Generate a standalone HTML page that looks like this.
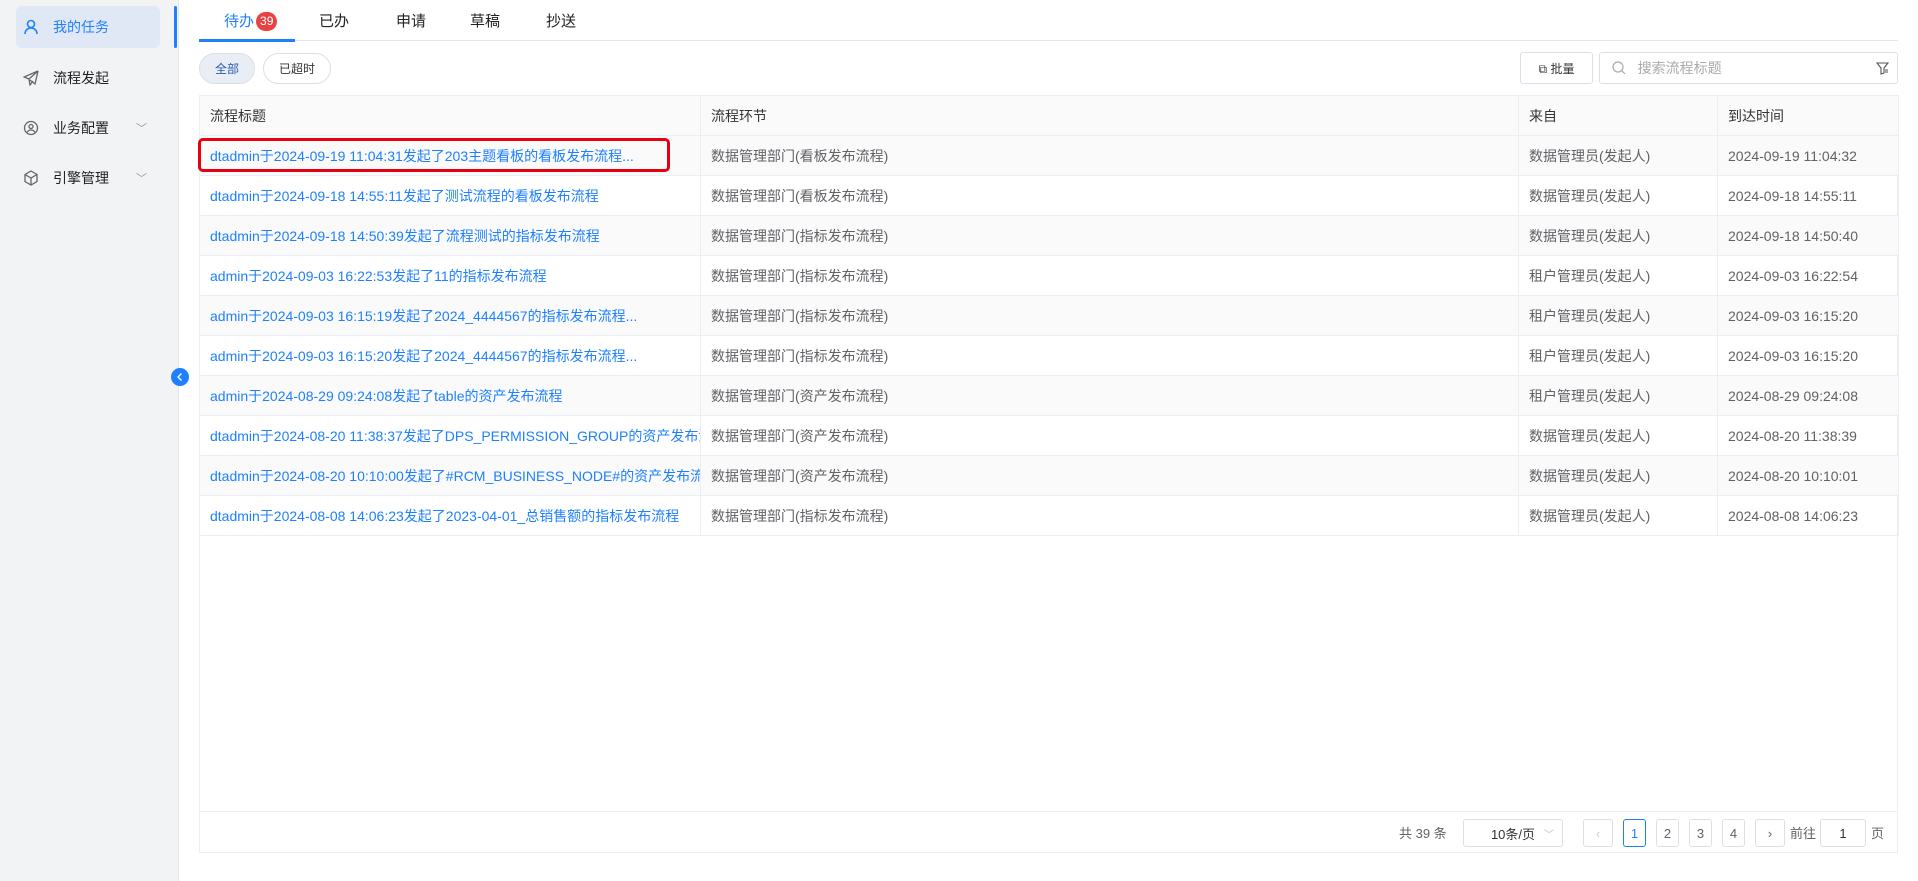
<!DOCTYPE html>
<html><head><meta charset="utf-8"><style>
*{box-sizing:border-box;margin:0;padding:0}
body{width:1918px;height:881px;overflow:hidden;background:#fff;font-family:"Liberation Sans","Noto Sans CJK SC",sans-serif;font-size:14px;color:#333;position:relative}
.side{position:absolute;left:0;top:0;width:179px;height:881px;background:#f2f3f5;border-right:1px solid #e4e6eb}
.item{position:absolute;left:16px;width:144px;height:42px;display:flex;align-items:center;padding-left:7px;font-size:14px;color:#222;border-radius:6px}
.item svg{margin-right:14px}
.item.act{background:#e1e8f5;color:#1e80ff}
.chev{position:absolute;left:120px;color:#999;font-size:11px}
.bar{position:absolute;left:174px;top:6px;width:3px;height:42px;background:#1e80ff;border-radius:2px}
.tog{position:absolute;left:171px;top:368px;width:18px;height:18px;border-radius:50%;background:#1e80ff;z-index:5}
.tab{position:absolute;top:10px;font-size:15px;color:#222}
.line{position:absolute;left:199px;top:40px;width:1699px;height:1px;background:#e4e7ed}
.ul{position:absolute;left:199px;top:39px;width:96px;height:3px;background:#1e80ff}
.badge{display:inline-block;background:#e84343;color:#fff;border-radius:10px;font-size:12px;padding:0 4px;line-height:19px;margin-left:2px;vertical-align:1px}
.pill{position:absolute;top:53px;height:31px;border:1px solid #dcdfe6;border-radius:16px;font-size:12px;display:flex;align-items:center;justify-content:center;color:#333}
.btn{position:absolute;border:1px solid #dcdfe6;border-radius:3px;background:#fff;display:flex;align-items:center;justify-content:center;font-size:12px}
table{position:absolute;left:199px;top:95px;width:1699px;border-collapse:collapse;table-layout:fixed}
td,th{height:40px;border:1px solid #ebeef5;padding:0 10px;font-weight:normal;text-align:left;white-space:nowrap;overflow:hidden;font-size:14px;color:#606266}
th{background:#fafafa;color:#333}
tr:nth-child(even) td{background:#fafafa}
td a{color:#1e80ff;text-decoration:none}
.frame{position:absolute;left:199px;top:95px;width:1699px;height:758px;border:1px solid #ebeef5}
.pag{position:absolute;left:199px;top:811px;width:1699px;height:1px;background:#ebeef5}
.pb{position:absolute;top:819px;height:28px;border:1px solid #dcdfe6;border-radius:3px;display:flex;align-items:center;justify-content:center;font-size:13px;color:#606266;background:#fff}
.pt{position:absolute;top:823px;font-size:13px;color:#606266}
</style></head><body>
<div class="side">
<div class="item act" style="top:6px"><svg width="16" height="16" viewBox="0 0 16 16" fill="none" stroke="#1e80ff" stroke-width="1.6"><circle cx="8" cy="5" r="3.5"/><path d="M2 15c0-4 3-6 6-6s6 2 6 6"/></svg>我的任务</div>
<div class="item" style="top:57px"><svg width="16" height="16" viewBox="0 0 16 16" fill="none" stroke="#666" stroke-width="1.3"><path d="M15 1L1 7l5 2 1 6 3-4 M15 1L6 9 M15 1l-3 13-5-4"/></svg>流程发起</div>
<div class="item" style="top:107px"><svg width="16" height="16" viewBox="0 0 16 16" fill="none" stroke="#666" stroke-width="1.3"><circle cx="8" cy="8" r="6.5"/><circle cx="8" cy="6.5" r="2"/><path d="M4 12.5c1-2 2.5-2.5 4-2.5s3 .5 4 2.5"/></svg>业务配置<span class="chev">﹀</span></div>
<div class="item" style="top:157px"><svg width="16" height="16" viewBox="0 0 16 16" fill="none" stroke="#666" stroke-width="1.3"><path d="M8 1l6 3.5v7L8 15l-6-3.5v-7z M2 4.5L8 8l6-3.5 M8 8v7"/></svg>引擎管理<span class="chev">﹀</span></div>
</div>
<div class="bar"></div>
<div class="tog"><svg width="18" height="18" viewBox="0 0 18 18"><path d="M10.5 5.5L7 9l3.5 3.5" stroke="#fff" stroke-width="1.3" fill="none"/></svg></div>
<div class="tab" style="left:224px;color:#1e80ff">待办<span class="badge">39</span></div>
<div class="tab" style="left:319px">已办</div>
<div class="tab" style="left:396px">申请</div>
<div class="tab" style="left:470px">草稿</div>
<div class="tab" style="left:546px">抄送</div>
<div class="line"></div><div class="ul"></div>
<div class="pill" style="left:199px;width:56px;background:#e8edf6;color:#2a5bb0">全部</div>
<div class="pill" style="left:263px;width:68px">已超时</div>
<div class="btn" style="left:1520px;top:52px;width:73px;height:32px">⧉&nbsp;批量</div>
<div class="btn" style="left:1599px;top:52px;width:299px;height:32px;justify-content:flex-start;padding-left:12px;color:#aaa;font-size:14px"><svg width="14" height="14" viewBox="0 0 14 14" fill="none" stroke="#aaa" stroke-width="1.2"><circle cx="6" cy="6" r="5"/><path d="M10 10l3 3"/></svg>&nbsp;&nbsp;&nbsp;搜索流程标题<svg style="position:absolute;right:8px" width="13" height="13" viewBox="0 0 13 13" fill="none" stroke="#555" stroke-width="1.1"><path d="M1 1h11L8 6v5l-3 1V6z"/><path d="M9 8h3M9 10h3"/></svg></div>
<div class="frame"></div>
<table>
<colgroup><col style="width:501px"><col style="width:818px"><col style="width:199px"><col style="width:181px"></colgroup>
<tr><th>流程标题</th><th>流程环节</th><th>来自</th><th>到达时间</th></tr>
<tr><td><a>dtadmin于2024-09-19 11:04:31发起了203主题看板的看板发布流程...</a></td><td>数据管理部门(看板发布流程)</td><td>数据管理员(发起人)</td><td>2024-09-19 11:04:32</td></tr>
<tr><td><a>dtadmin于2024-09-18 14:55:11发起了测试流程的看板发布流程</a></td><td>数据管理部门(看板发布流程)</td><td>数据管理员(发起人)</td><td>2024-09-18 14:55:11</td></tr>
<tr><td><a>dtadmin于2024-09-18 14:50:39发起了流程测试的指标发布流程</a></td><td>数据管理部门(指标发布流程)</td><td>数据管理员(发起人)</td><td>2024-09-18 14:50:40</td></tr>
<tr><td><a>admin于2024-09-03 16:22:53发起了11的指标发布流程</a></td><td>数据管理部门(指标发布流程)</td><td>租户管理员(发起人)</td><td>2024-09-03 16:22:54</td></tr>
<tr><td><a>admin于2024-09-03 16:15:19发起了2024_4444567的指标发布流程...</a></td><td>数据管理部门(指标发布流程)</td><td>租户管理员(发起人)</td><td>2024-09-03 16:15:20</td></tr>
<tr><td><a>admin于2024-09-03 16:15:20发起了2024_4444567的指标发布流程...</a></td><td>数据管理部门(指标发布流程)</td><td>租户管理员(发起人)</td><td>2024-09-03 16:15:20</td></tr>
<tr><td><a>admin于2024-08-29 09:24:08发起了table的资产发布流程</a></td><td>数据管理部门(资产发布流程)</td><td>租户管理员(发起人)</td><td>2024-08-29 09:24:08</td></tr>
<tr><td><a>dtadmin于2024-08-20 11:38:37发起了DPS_PERMISSION_GROUP的资产发布流程</a></td><td>数据管理部门(资产发布流程)</td><td>数据管理员(发起人)</td><td>2024-08-20 11:38:39</td></tr>
<tr><td><a>dtadmin于2024-08-20 10:10:00发起了#RCM_BUSINESS_NODE#的资产发布流程</a></td><td>数据管理部门(资产发布流程)</td><td>数据管理员(发起人)</td><td>2024-08-20 10:10:01</td></tr>
<tr><td><a>dtadmin于2024-08-08 14:06:23发起了2023-04-01_总销售额的指标发布流程</a></td><td>数据管理部门(指标发布流程)</td><td>数据管理员(发起人)</td><td>2024-08-08 14:06:23</td></tr>
</table>
<div style="position:absolute;left:198px;top:138px;width:472px;height:34px;border:3px solid #e60012;border-radius:5px"></div>
<div class="pag"></div>
<div class="pt" style="left:1399px">共 39 条</div>
<div class="pb" style="left:1463px;width:100px;color:#333">10条/页<span style="position:absolute;right:8px;color:#bbb;font-size:10px">﹀</span></div>
<div class="pb" style="left:1583px;width:30px;color:#ccc">‹</div>
<div class="pb" style="left:1623px;width:23px;border-color:#1e80ff;color:#1e80ff">1</div>
<div class="pb" style="left:1656px;width:23px">2</div>
<div class="pb" style="left:1689px;width:23px">3</div>
<div class="pb" style="left:1722px;width:23px">4</div>
<div class="pb" style="left:1755px;width:30px">›</div>
<div class="pt" style="left:1790px">前往</div>
<div class="pb" style="left:1820px;width:46px;color:#333">1</div>
<div class="pt" style="left:1871px">页</div>
</body></html>
